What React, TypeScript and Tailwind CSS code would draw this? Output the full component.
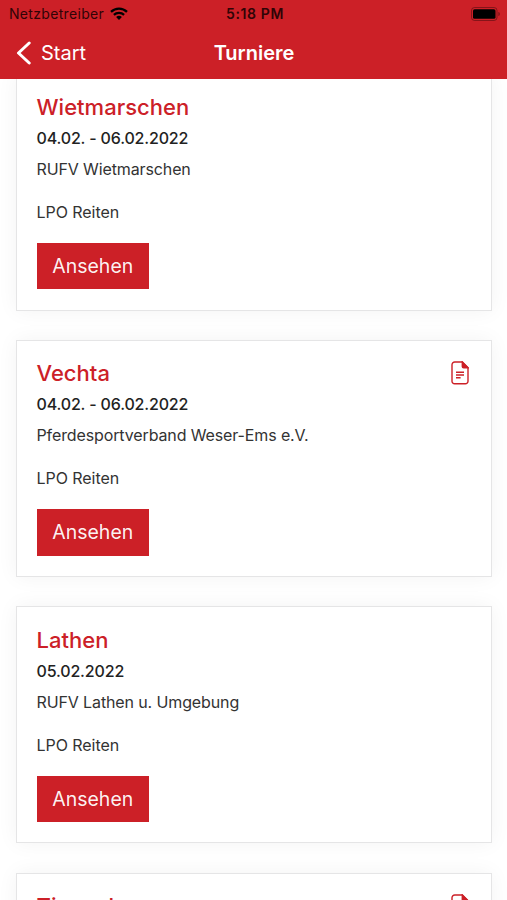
type Tournament = {
  id: number;
  place: string;
  date: string;
  organizer: string;
  category: string;
  hasDocument: boolean;
};

const tournaments: Tournament[] = [
  { id: 1, place: 'Wietmarschen', date: '04.02. - 06.02.2022', organizer: 'RUFV Wietmarschen', category: 'LPO Reiten', hasDocument: false },
  { id: 2, place: 'Vechta', date: '04.02. - 06.02.2022', organizer: 'Pferdesportverband Weser-Ems e.V.', category: 'LPO Reiten', hasDocument: true },
  { id: 3, place: 'Lathen', date: '05.02.2022', organizer: 'RUFV Lathen u. Umgebung', category: 'LPO Reiten', hasDocument: false },
  { id: 4, place: 'Timmel', date: '05.02. - 06.02.2022', organizer: 'RUFV Timmel', category: 'LPO Reiten', hasDocument: true },
];

function WifiIcon() {
  return (
    <svg viewBox="0 0 18 13" className="h-[13px] w-[18px]" fill="none" stroke="currentColor">
      <path d="M1 4.9a11.5 11.5 0 0 1 16 0" strokeWidth="2.3" />
      <path d="M3.9 7.9a7.3 7.3 0 0 1 10.2 0" strokeWidth="2.2" />
      <path d="M9 13 6.1 10.1a4.1 4.1 0 0 1 5.8 0Z" fill="currentColor" stroke="none" />
    </svg>
  );
}

function BatteryIcon() {
  return (
    <svg viewBox="0 0 30 14" className="h-[14px] w-[30px]">
      <rect x="0.5" y="0.5" width="25.5" height="13" rx="3" fill="none" stroke="#000" strokeOpacity="0.35" />
      <rect x="2" y="2.2" width="22.5" height="9.6" rx="1.6" fill="#000" />
      <path d="M27.4 5v4c1.1-.4 1.4-1.2 1.4-2s-.3-1.6-1.4-2Z" fill="#000" fillOpacity="0.4" />
    </svg>
  );
}

function DocumentIcon() {
  return (
    <svg viewBox="0 0 18 24" className="h-[24px] w-[18px] text-[#cc2027]" fill="none" stroke="currentColor" strokeWidth="1.4">
      <path d="M3.8 1h7.5L17 6.7v13.5a2.6 2.6 0 0 1-2.6 2.6H3.6A2.6 2.6 0 0 1 1 20.2V3.8A2.8 2.8 0 0 1 3.8 1Z" />
      <path d="M11.3 1v4.4c0 .8.5 1.3 1.3 1.3H17Z" fill="currentColor" />
      <path d="M5 11.2h8M5 14h8M5 16.8h4.6" />
    </svg>
  );
}

function TournamentCard({ tournament }: { tournament: Tournament }) {
  return (
    <article className="flex h-[237px] shrink-0 items-start justify-between border border-[#e5e5e6] bg-white pt-[16.4px] pr-[21.5px] pl-[20px] shadow-[0_0_20px_rgba(0,0,0,0.05)]">
      <div className="flex flex-col items-start">
        <h2 className="text-[22px] leading-[32px] font-medium tracking-[0.02px] text-[#cc2027]">{tournament.place}</h2>
        <p className="text-[16px] leading-[31px] font-medium tracking-[-0.16px] text-[#222]">{tournament.date}</p>
        <p className="text-[16px] leading-[31px] tracking-[-0.12px] text-[#333]">{tournament.organizer}</p>
        <p className="mt-3 text-[16px] leading-[31px] tracking-[-0.05px] text-[#333]">{tournament.category}</p>
        <button className="mt-[15px] h-[46.5px] w-[112.5px] bg-[#cc2027] pt-px text-center text-[19.5px] text-white/95">
          Ansehen
        </button>
      </div>
      {tournament.hasDocument && (
        <div className="pt-[3.5px]">
          <DocumentIcon />
        </div>
      )}
    </article>
  );
}

function App() {
  return (
    <div className="flex h-[900px] w-[507px] flex-col overflow-hidden bg-white font-['Inter',sans-serif]">
      <header className="z-10 h-[79px] shrink-0 bg-[#cc2027]">
        <div className="grid h-[27px] grid-cols-3 items-center pr-[6px] pl-[9px] text-[14px] text-[#300406]">
          <div className="flex items-center gap-[6px]">
            <span className="tracking-[0.32px]">Netzbetreiber</span>
            <span className="text-black">
              <WifiIcon />
            </span>
          </div>
          <span className="text-center font-semibold tracking-[0.6px]">5:18 PM</span>
          <div className="flex justify-end">
            <BatteryIcon />
          </div>
        </div>
        <div className="grid h-[51px] grid-cols-3 items-center pr-4 pl-4 text-[20px] text-white">
          <div className="flex items-center gap-[9px]">
            <svg viewBox="0 0 16 24" className="h-[24px] w-[16px]" fill="none" stroke="currentColor" strokeWidth="3" strokeLinecap="round" strokeLinejoin="round">
              <path d="M13.2 2 2.5 12l10.7 10" />
            </svg>
            <span>Start</span>
          </div>
          <h1 className="pl-px text-center font-semibold">Turniere</h1>
        </div>
      </header>

      <main className="-mt-[5.5px] flex flex-1 flex-col gap-[29.4px] overflow-hidden px-[15.5px]">
        {tournaments.map((tournament) => (
          <TournamentCard key={tournament.id} tournament={tournament} />
        ))}
      </main>
    </div>
  );
}

export default App;
